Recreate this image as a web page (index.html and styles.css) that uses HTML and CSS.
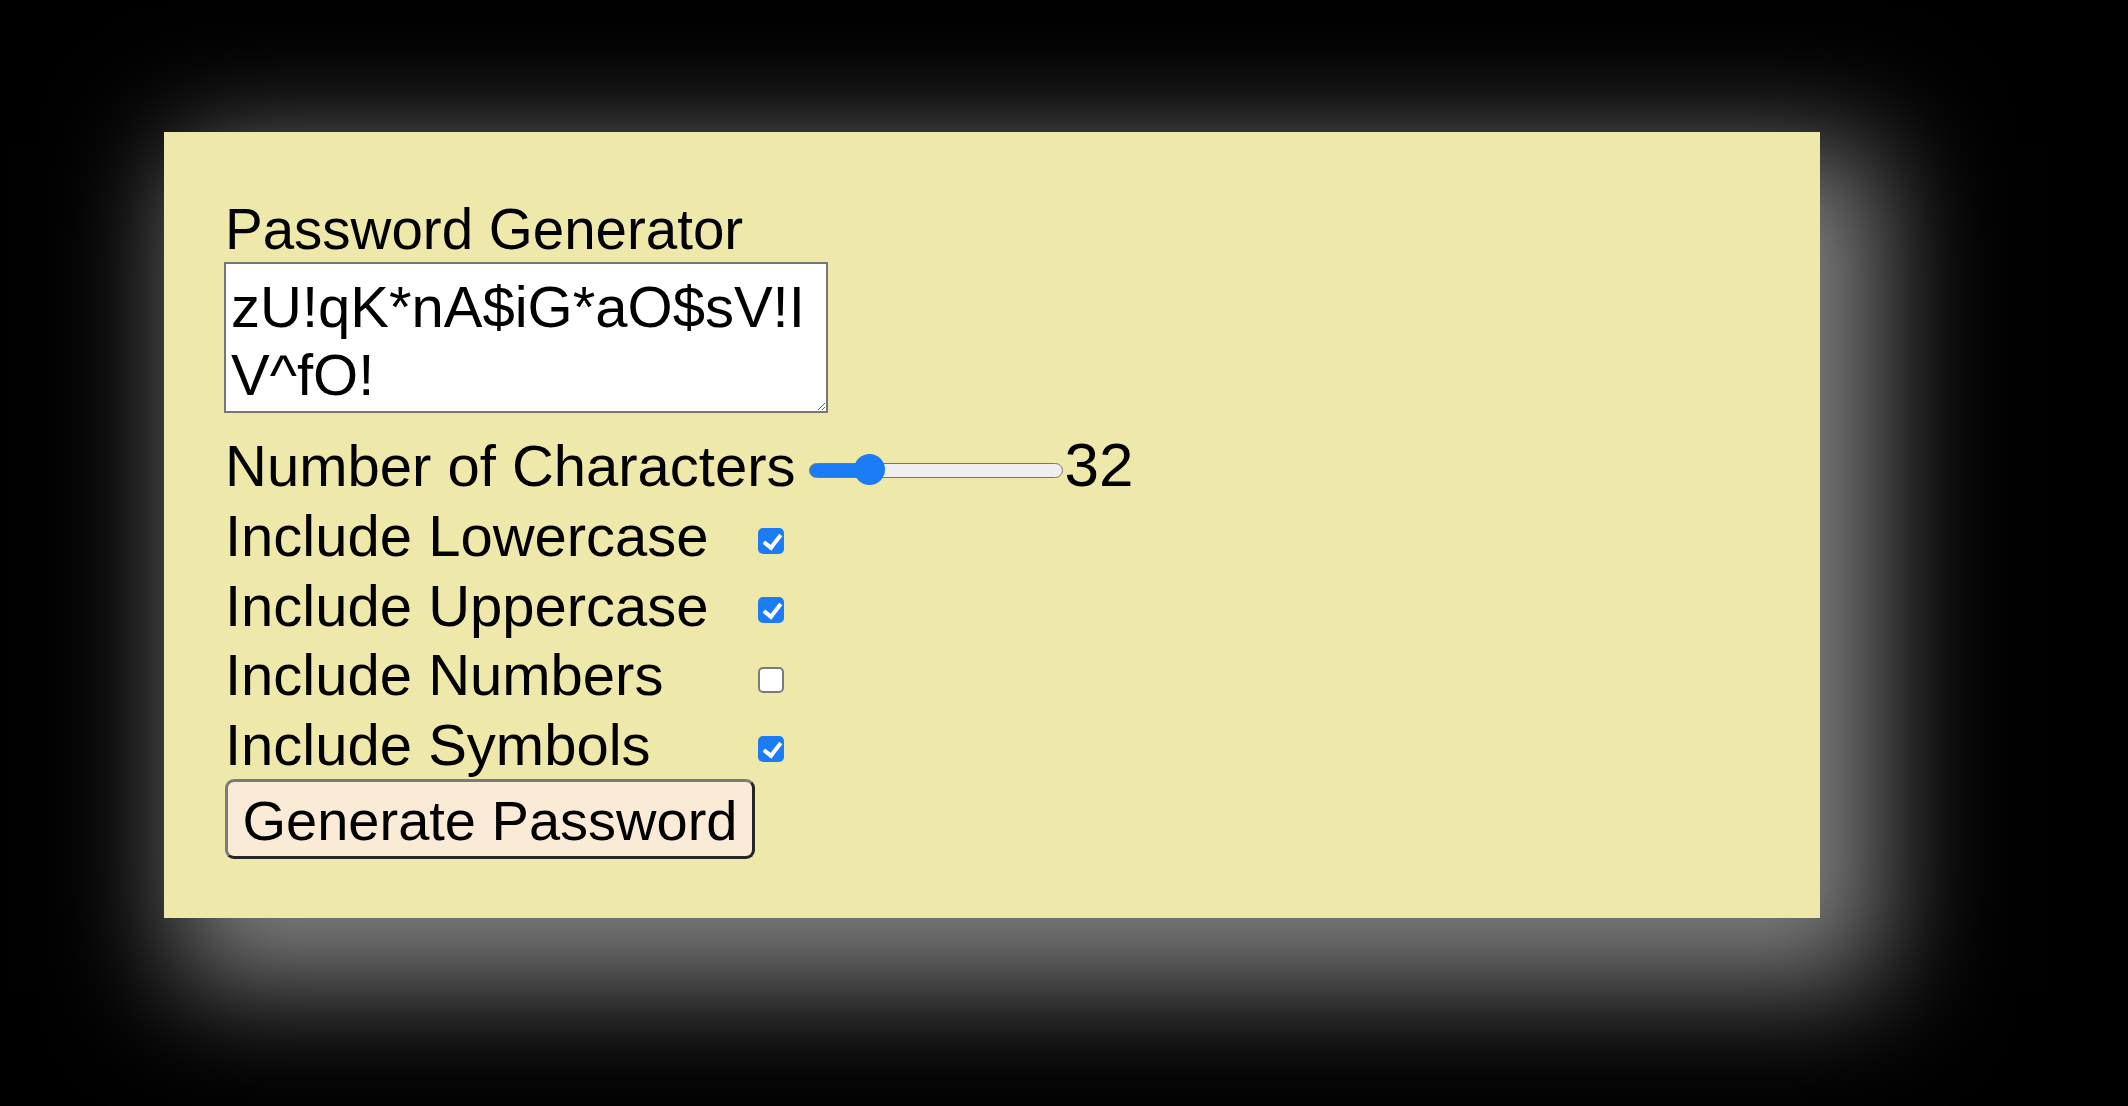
FILE: index.html
```html
<!DOCTYPE html>
<html lang="en">
<head>
<meta charset="utf-8">
<title>Password Generator</title>
<link rel="stylesheet" href="styles.css">
</head>
<body>
<div class="panel">
  <div class="title">Password Generator</div>
  <textarea class="output" spellcheck="false">zU!qK*nA$iG*aO$sV!I
V^fO!</textarea>
  <div class="row row-length"><label class="len-label">Number of Characters</label><input type="range" class="slider" min="8" max="128" value="32" style="--pos: 0.2"><span class="count">32</span></div>
  <div class="row"><label class="opt">Include Lowercase</label><input type="checkbox" class="check" checked></div>
  <div class="row"><label class="opt">Include Uppercase</label><input type="checkbox" class="check" checked></div>
  <div class="row"><label class="opt">Include Numbers</label><input type="checkbox" class="check"></div>
  <div class="row"><label class="opt">Include Symbols</label><input type="checkbox" class="check" checked></div>
  <button class="generate" type="button">Generate Password</button>
</div>
</body>
</html>
```
FILE: styles.css
```css
html, body {
  margin: 0;
}
body {
  background: #000;
  font-family: "Liberation Sans", Arial, sans-serif;
  font-size: 58px;
  color: #000;
  min-height: 1106px;
  overflow: hidden;
}
.panel {
  box-sizing: border-box;
  width: 1656px;
  height: 786px;
  margin: 132px 0 0 164px;
  padding: 66px 58px 0;
  background: #eee8aa;
  box-shadow: 36px 42px 110px 26px #808080;
}
.title {
  padding-left: 3px;
  font-size: 56.5px;
  line-height: 64px;
}
.output {
  display: block;
  box-sizing: border-box;
  width: 604px;
  height: 151px;
  margin: 0 0 0 2px;
  padding: 9px 4px 0 5px;
  border: 2px solid #767676;
  border-radius: 0;
  background: #fff;
  color: #000;
  font-family: "Liberation Sans", Arial, sans-serif;
  font-size: 58px;
  line-height: 68px;
  outline: none;
}
.row {
  padding-left: 3px;
  line-height: 69.5px;
  white-space: nowrap;
}
.row-length {
  margin-top: 15.5px;
  line-height: 71.5px;
}
.opt {
  display: inline-block;
  width: 533px;
}
.check {
  -webkit-appearance: none;
  appearance: none;
  box-sizing: border-box;
  position: relative;
  width: 26px;
  height: 26px;
  margin: 0;
  vertical-align: middle;
  border-radius: 5px;
  background: #1b7cf5;
}
.check:checked::after {
  content: "";
  position: absolute;
  left: 8.5px;
  top: 3px;
  width: 7px;
  height: 14px;
  border: solid #fff;
  border-width: 0 4px 4px 0;
  transform: rotate(38deg);
}
.check:not(:checked) {
  background: #fff;
  border: 2px solid #7a7a7a;
}
.slider {
  -webkit-appearance: none;
  appearance: none;
  width: 254px;
  height: 31px;
  margin: 0 2px 0 13px;
  padding: 0;
  vertical-align: middle;
  background: transparent;
}
.slider::-webkit-slider-runnable-track {
  box-sizing: border-box;
  height: 15px;
  border: 1.5px solid #777;
  border-radius: 8px;
  background: linear-gradient(to right, #1b7cf5 calc(15.5px + var(--pos) * (100% - 31px)), #efefef calc(15.5px + var(--pos) * (100% - 31px)));
}
.slider::-webkit-slider-thumb {
  -webkit-appearance: none;
  appearance: none;
  width: 31px;
  height: 31px;
  margin-top: -9.5px;
  border: none;
  border-radius: 50%;
  background: #1b7cf5;
}
.count {
  font-size: 62px;
}
.generate {
  display: block;
  margin: 0 0 0 3px;
  padding: 7px 14.5px 3px;
  font-family: inherit;
  font-size: 56px;
  line-height: 64px;
  color: #000;
  background: #faebd7;
  border: 3px solid;
  border-color: #7b7b7b #262626 #262626 #7b7b7b;
  border-radius: 9px;
}
```
